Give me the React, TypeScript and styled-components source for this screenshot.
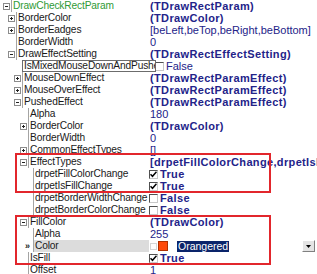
import React from 'react';
import styled, { createGlobalStyle } from 'styled-components';

const GlobalStyle = createGlobalStyle`
  html, body {
    margin: 0;
    padding: 0;
    background: #fff;
  }
  body {
    font-family: 'Liberation Sans', Arial, sans-serif;
    font-size: 10.2px;
    overflow: hidden;
  }
`;

const ROW_H = 12;
const NAME_W = 149;

type Value =
  | { kind: 'text'; text: string; bold?: boolean }
  | { kind: 'check'; checked: boolean; text: string; bold?: boolean }
  | { kind: 'color'; name: string; swatch: string };

interface Prop {
  name: string;
  line: number;
  exp?: 'plus' | 'minus';
  marker?: string;
  root?: boolean;
  selected?: boolean;
  hint?: boolean;
  value: Value;
}

const Inspector = styled.div`
  width: 317px;
  height: 274px;
  overflow: hidden;
  background: #fff;
  display: flex;
  flex-direction: column;
`;

const Row = styled.div`
  position: relative;
  display: grid;
  grid-template-columns: ${NAME_W}px 1fr;
  height: ${ROW_H}px;
  line-height: ${ROW_H}px;
  flex: none;
`;

const NameCell = styled.div<{ $line: number }>`
  display: flex;
  padding-left: ${p => p.$line - 8}px;
  overflow: hidden;
  white-space: nowrap;
`;

const Gutter = styled.div`
  width: 8px;
  flex: none;
  display: flex;
  align-items: center;
  color: #202020;
  font-size: 9px;
  font-weight: 700;
  letter-spacing: -1px;
`;

const NameText = styled.div<{ $root?: boolean; $selected?: boolean }>`
  flex: 1;
  border-left: 1px solid #a4a4a4;
  padding-left: 1px;
  color: ${p => (p.$root ? '#2f9a35' : '#1a1a1a')};
  background: ${p => (p.$selected ? '#dcdcdc' : 'transparent')};
  letter-spacing: -0.15px;
  overflow: hidden;
`;

const Hint = styled.div`
  position: absolute;
  left: 22px;
  top: 0;
  width: 131px;
  height: ${ROW_H - 2}px;
  line-height: ${ROW_H - 2}px;
  border: 1px solid #6c6c6c;
  background: #fff;
  color: #1a1a1a;
  padding-left: 1px;
  letter-spacing: -0.15px;
  white-space: nowrap;
  overflow: hidden;
  z-index: 1;
`;

const ValueCell = styled.div<{ $bold?: boolean; $pad?: number }>`
  display: flex;
  align-items: center;
  gap: 1px;
  padding-left: ${p => p.$pad ?? 1}px;
  color: #232389;
  font-size: 11px;
  font-weight: ${p => (p.$bold ? 700 : 400)};
  letter-spacing: ${p => (p.$bold ? '0.35px' : '0')};
  white-space: nowrap;
  overflow: hidden;
`;

const CheckBox = styled.span`
  flex: none;
  width: 7px;
  height: 7px;
  margin-right: 1px;
  border-top: 1px solid #505050;
  border-left: 1px solid #505050;
  border-right: 1px solid #c8c8c8;
  border-bottom: 1px solid #c8c8c8;
  background: #fff;
  display: flex;
  align-items: center;
  justify-content: center;
`;

const Combo = styled.div`
  flex: 1;
  display: flex;
  align-items: center;
  height: ${ROW_H}px;
  color: #fff;
  font-weight: 400;
  letter-spacing: 0;
`;

const DimBox = styled.span`
  width: 5px;
  height: 5px;
  margin-left: 1px;
  border: 1px solid #d6d6d6;
  flex: none;
`;

const Swatch = styled.span<{ $color: string }>`
  width: 8px;
  height: 8px;
  margin-left: 1px;
  background: ${p => p.$color};
  border: 1px solid #b03000;
  flex: none;
`;

const Selected = styled.span`
  margin-left: 9px;
  padding: 0 1px;
  height: 11px;
  line-height: 11px;
  font-size: 10.5px;
  background: #0a246a;
  color: #fff;
`;

const DropButton = styled.span`
  margin-left: auto;
  margin-right: 2px;
  width: 11px;
  height: 10px;
  flex: none;
  background: #e4e4e4;
  border-top: 1px solid #fff;
  border-left: 1px solid #fff;
  border-right: 1px solid #808080;
  border-bottom: 1px solid #808080;
  display: flex;
  align-items: center;
  justify-content: center;
`;

const Group = styled.div`
  position: relative;
  flex: none;
`;

const Frame = styled.div<{ $top: number }>`
  position: absolute;
  box-sizing: border-box;
  left: 15px;
  width: 256px;
  top: ${p => p.$top}px;
  bottom: -1px;
  border: 2px solid #e2262c;
  pointer-events: none;
  z-index: 2;
`;

const Expander = ({ open }: { open: boolean }) => (
  <svg width="7" height="7" viewBox="0 0 7 7">
    <rect x="0.5" y="0.5" width="6" height="6" fill="#fff" stroke="#8c8c8c" />
    <line x1="2" y1="3.5" x2="5" y2="3.5" stroke="#222" />
    {!open && <line x1="3.5" y1="2" x2="3.5" y2="5" stroke="#222" />}
  </svg>
);

const Tick = () => (
  <svg width="7" height="7" viewBox="0 0 7 7">
    <path d="M0.5 3.2 L2.5 5.3 L6.5 0.8" fill="none" stroke="#000" strokeWidth="1.5" />
  </svg>
);

const Arrow = () => (
  <svg width="5" height="3" viewBox="0 0 5 3">
    <path d="M0 0 H5 L2.5 3 Z" fill="#000" />
  </svg>
);

const rows: Prop[] = [
  { name: 'DrawCheckRectParam', line: 11, exp: 'minus', root: true, value: { kind: 'text', text: '(TDrawRectParam)', bold: true } },
  { name: 'BorderColor', line: 16, exp: 'plus', value: { kind: 'text', text: '(TDrawColor)', bold: true } },
  { name: 'BorderEadges', line: 16, exp: 'plus', value: { kind: 'text', text: '[beLeft,beTop,beRight,beBottom]' } },
  { name: 'BorderWidth', line: 16, value: { kind: 'text', text: '0' } },
  { name: 'DrawEffectSetting', line: 16, exp: 'minus', value: { kind: 'text', text: '(TDrawRectEffectSetting)', bold: true } },
  { name: 'IsMixedMouseDownAndPushed', line: 22, hint: true, value: { kind: 'check', checked: false, text: 'False' } },
  { name: 'MouseDownEffect', line: 22, exp: 'plus', value: { kind: 'text', text: '(TDrawRectParamEffect)', bold: true } },
  { name: 'MouseOverEffect', line: 22, exp: 'plus', value: { kind: 'text', text: '(TDrawRectParamEffect)', bold: true } },
  { name: 'PushedEffect', line: 22, exp: 'minus', value: { kind: 'text', text: '(TDrawRectParamEffect)', bold: true } },
  { name: 'Alpha', line: 28, value: { kind: 'text', text: '180' } },
  { name: 'BorderColor', line: 28, exp: 'plus', value: { kind: 'text', text: '(TDrawColor)', bold: true } },
  { name: 'BorderWidth', line: 28, value: { kind: 'text', text: '0' } },
  { name: 'CommonEffectTypes', line: 28, exp: 'plus', value: { kind: 'text', text: '[]' } },
  { name: 'EffectTypes', line: 28, exp: 'minus', value: { kind: 'text', text: '[drpetFillColorChange,drpetIsFillChange]', bold: true } },
  { name: 'drpetFillColorChange', line: 33, value: { kind: 'check', checked: true, text: 'True', bold: true } },
  { name: 'drpetIsFillChange', line: 33, value: { kind: 'check', checked: true, text: 'True', bold: true } },
  { name: 'drpetBorderWidthChange', line: 33, value: { kind: 'check', checked: false, text: 'False', bold: true } },
  { name: 'drpetBorderColorChange', line: 33, value: { kind: 'check', checked: false, text: 'False', bold: true } },
  { name: 'FillColor', line: 28, exp: 'minus', value: { kind: 'text', text: '(TDrawColor)', bold: true } },
  { name: 'Alpha', line: 33, value: { kind: 'text', text: '255' } },
  { name: 'Color', line: 33, marker: '»', selected: true, value: { kind: 'color', name: 'Orangered', swatch: '#ff4a0a' } },
  { name: 'IsFill', line: 28, value: { kind: 'check', checked: true, text: 'True', bold: true } },
  { name: 'Offset', line: 28, value: { kind: 'text', text: '1' } },
];

const PropValue = ({ value, hinted }: { value: Value; hinted?: boolean }) => {
  if (value.kind === 'check') {
    return (
      <ValueCell $bold={value.bold} $pad={hinted ? 6 : 0}>
        <CheckBox>{value.checked && <Tick />}</CheckBox>
        {value.text}
      </ValueCell>
    );
  }
  if (value.kind === 'color') {
    return (
      <ValueCell $pad={0}>
        <Combo>
          <DimBox />
          <Swatch $color={value.swatch} />
          <Selected>{value.name}</Selected>
          <DropButton>
            <Arrow />
          </DropButton>
        </Combo>
      </ValueCell>
    );
  }
  return <ValueCell $bold={value.bold}>{value.text}</ValueCell>;
};

const PropRow = ({ prop }: { prop: Prop }) => (
  <Row>
    <NameCell $line={prop.line}>
      <Gutter>
        {prop.exp && <Expander open={prop.exp === 'minus'} />}
        {prop.marker}
      </Gutter>
      {/* the hint window below shows the full name of a truncated row */}
      <NameText $root={prop.root} $selected={prop.selected}>
        {prop.hint ? '' : prop.name}
      </NameText>
    </NameCell>
    <PropValue value={prop.value} hinted={prop.hint} />
    {prop.hint && <Hint>{prop.name}</Hint>}
  </Row>
);

const renderRows = (from: number, to: number) =>
  rows.slice(from, to).map((p, i) => <PropRow key={from + i} prop={p} />);

export default function App() {
  return (
    <>
      <GlobalStyle />
      <Inspector>
        {renderRows(0, 13)}
        <Group>
          <Frame $top={-3} />
          {renderRows(13, 16)}
        </Group>
        {renderRows(16, 18)}
        <Group>
          <Frame $top={-1} />
          {renderRows(18, 22)}
        </Group>
        {renderRows(22, 23)}
      </Inspector>
    </>
  );
}
